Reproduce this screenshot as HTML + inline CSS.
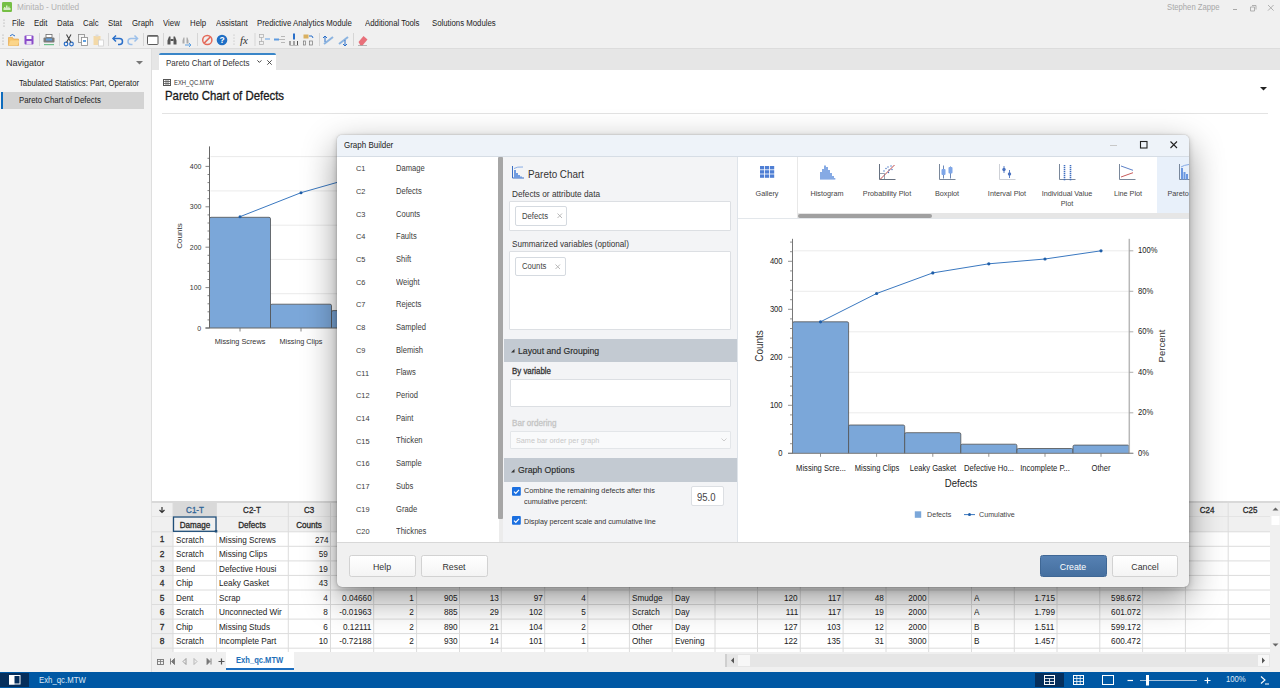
<!DOCTYPE html><html><head><meta charset="utf-8"><style>
html,body{margin:0;padding:0;}
body{width:1280px;height:688px;overflow:hidden;position:relative;background:#f0f0f0;font-family:"Liberation Sans",sans-serif;}
.t{position:absolute;white-space:nowrap;line-height:1;}
svg{position:absolute;overflow:visible;}
</style></head><body>
<svg style="left:2px;top:2px" width="10" height="10"><rect width="10" height="10" rx="1.2" fill="#76bf44"/><path d="M1.5 8h7v-2h-1v-1.5h-1v1h-1v-2h-1.5v2h-1v-0.5h-1v1h-.5z" fill="#d6ecc4"/></svg>
<div class="t" style="left:17.00px;transform-origin:0 0;transform:scaleX(0.9346);top:3.18px;font-size:8.88px;color:#b2b2b2;">Minitab - Untitled</div>
<div class="t" style="left:1167.00px;transform-origin:0 0;transform:scaleX(0.9346);top:3.69px;font-size:8.24px;color:#a8a8a8;">Stephen Zappe</div>
<div style="position:absolute;left:1232.5px;top:9px;width:4.5px;height:1px;background:#a8a8a8"></div>
<svg style="left:1250px;top:5px" width="7" height="7"><path d="M2 .5h4v4M.5 2h4v4h-4z" fill="none" stroke="#a8a8a8" stroke-width=".9"/></svg>
<svg style="left:1267.5px;top:4.7px" width="6" height="6"><path d="M0 0L5.6 5.6M5.6 0L0 5.6" stroke="#a8a8a8" stroke-width=".9"/></svg>
<svg style="left:3px;top:19px" width="2" height="10"><circle cx="1" cy="1" r=".6" fill="#999"/><circle cx="1" cy="4" r=".6" fill="#999"/><circle cx="1" cy="7" r=".6" fill="#999"/></svg>
<div class="t" style="left:11.60px;transform-origin:0 0;transform:scaleX(0.9346);top:19.30px;font-size:8.35px;color:#1e1e1e;">File</div>
<div class="t" style="left:33.50px;transform-origin:0 0;transform:scaleX(0.9346);top:19.30px;font-size:8.35px;color:#1e1e1e;">Edit</div>
<div class="t" style="left:56.90px;transform-origin:0 0;transform:scaleX(0.9346);top:19.30px;font-size:8.35px;color:#1e1e1e;">Data</div>
<div class="t" style="left:82.90px;transform-origin:0 0;transform:scaleX(0.9346);top:19.30px;font-size:8.35px;color:#1e1e1e;">Calc</div>
<div class="t" style="left:107.90px;transform-origin:0 0;transform:scaleX(0.9346);top:19.30px;font-size:8.35px;color:#1e1e1e;">Stat</div>
<div class="t" style="left:131.60px;transform-origin:0 0;transform:scaleX(0.9346);top:19.30px;font-size:8.35px;color:#1e1e1e;">Graph</div>
<div class="t" style="left:162.50px;transform-origin:0 0;transform:scaleX(0.9346);top:19.30px;font-size:8.35px;color:#1e1e1e;">View</div>
<div class="t" style="left:189.50px;transform-origin:0 0;transform:scaleX(0.9346);top:19.30px;font-size:8.35px;color:#1e1e1e;">Help</div>
<div class="t" style="left:216.00px;transform-origin:0 0;transform:scaleX(0.9346);top:19.30px;font-size:8.35px;color:#1e1e1e;">Assistant</div>
<div class="t" style="left:257.00px;transform-origin:0 0;transform:scaleX(0.9346);top:19.30px;font-size:8.35px;color:#1e1e1e;">Predictive Analytics Module</div>
<div class="t" style="left:365.00px;transform-origin:0 0;transform:scaleX(0.9346);top:19.30px;font-size:8.35px;color:#1e1e1e;">Additional Tools</div>
<div class="t" style="left:432.00px;transform-origin:0 0;transform:scaleX(0.9346);top:19.30px;font-size:8.35px;color:#1e1e1e;">Solutions Modules</div>
<svg style="left:0;top:31px" width="380" height="17"><circle cx="3" cy="4" r=".6" fill="#999"/><circle cx="3" cy="7" r=".6" fill="#999"/><circle cx="3" cy="10" r=".6" fill="#999"/><circle cx="3" cy="13" r=".6" fill="#999"/><path d="M8.5 6.5h4l1 1.5h5v6.5h-10z" fill="#f7c46c" stroke="#e0a040" stroke-width=".6"/><path d="M8.5 14.5l2-5h9l-2 5z" fill="#fbd58a"/><path d="M10 5q2-3 5 0" fill="none" stroke="#2a6fc9" stroke-width="1"/><rect x="24.5" y="4.5" width="9" height="9" rx="1" fill="#8a4dc9"/><rect x="26.5" y="5" width="5" height="3" fill="#fff"/><rect x="26.5" y="10" width="5" height="3.5" fill="#e9dcf5"/><rect x="39" y="2" width="1" height="13" fill="#d6d6d6"/><rect x="46" y="3.5" width="6" height="3" fill="#fff" stroke="#6b6b6b" stroke-width=".8"/><rect x="43.5" y="6.5" width="11" height="5" rx="1" fill="#7a7a7a"/><rect x="46" y="7.5" width="6" height="2" fill="#5fa0e0"/><rect x="44" y="13" width="10" height="1.2" fill="#6cc08a"/><rect x="59" y="2" width="1" height="13" fill="#d6d6d6"/><circle cx="66" cy="13" r="1.8" fill="none" stroke="#2a6fc9" stroke-width="1.2"/><circle cx="71.5" cy="13" r="1.8" fill="none" stroke="#2a6fc9" stroke-width="1.2"/><path d="M66.5 11.5L71 3.5M71 11.5L66.5 3.5" stroke="#444" stroke-width="1.1"/><rect x="78.5" y="3.5" width="6" height="8" fill="#f4f4f4" stroke="#8a8a8a" stroke-width=".8"/><rect x="81.5" y="6.5" width="6" height="8" fill="#fff" stroke="#8a8a8a" stroke-width=".8"/><rect x="83" y="9" width="3" height="2" fill="#5fa0e0"/><rect x="93.5" y="5" width="7" height="9" fill="#f3d9a8"/><rect x="95.5" y="3.5" width="3" height="2" fill="#ddd"/><rect x="98.5" y="9" width="5" height="6" fill="#fff" stroke="#ccc" stroke-width=".7"/><rect x="108" y="2" width="1" height="13" fill="#d6d6d6"/><path d="M113.5 7.5h6a3 3 0 0 1 0 6h-1.5" fill="none" stroke="#2a6fc9" stroke-width="1.5"/><path d="M116 4.5l-3 3 3 3" fill="none" stroke="#2a6fc9" stroke-width="1.5"/><path d="M137 7.5h-6a3 3 0 0 0 0 6h1.5" fill="none" stroke="#9cc0ea" stroke-width="1.5"/><path d="M134.5 4.5l3 3-3 3" fill="none" stroke="#9cc0ea" stroke-width="1.5"/><rect x="143" y="2" width="1" height="13" fill="#d6d6d6"/><rect x="147.5" y="4.5" width="10.5" height="9" rx=".8" fill="#fff" stroke="#5a5a5a" stroke-width="1"/><rect x="147.5" y="4.5" width="10.5" height="1.3" fill="#6a6a6a"/><rect x="163" y="2" width="1" height="13" fill="#d6d6d6"/><path d="M167.5 13.5v-4l1.5-4h1.5v8zM176.5 13.5v-4l-1.5-4h-1.5v8z" fill="#555"/><rect x="170.5" y="8" width="3" height="2" fill="#555"/><path d="M182.5 12.5v-3l1-3h1v6zM188.5 12.5v-3l-1-3h-1v6z" fill="#aaa"/><path d="M185 14h6m-2-2l2 2-2 2" stroke="#5fa0e0" stroke-width="1" fill="none"/><rect x="197" y="2" width="1" height="13" fill="#d6d6d6"/><circle cx="207.3" cy="9" r="4.6" fill="none" stroke="#e46a5a" stroke-width="1.5"/><path d="M204.2 12.1l6.2-6.2" stroke="#e46a5a" stroke-width="1.5"/><circle cx="222" cy="9" r="5.3" fill="#1f6fc5"/><text x="222" y="12.2" font-size="8.5" font-weight="bold" fill="#fff" text-anchor="middle" font-family="Liberation Sans">?</text><circle cx="234" cy="4" r=".5" fill="#aaa"/><circle cx="234" cy="7" r=".5" fill="#aaa"/><circle cx="234" cy="10" r=".5" fill="#aaa"/><circle cx="234" cy="13" r=".5" fill="#aaa"/><text x="240" y="13" font-size="11" font-style="italic" font-family="Liberation Serif" fill="#333">fx</text><rect x="254.5" y="2" width="1" height="13" fill="#d6d6d6"/><rect x="259.5" y="3.5" width="4" height="3" fill="none" stroke="#aaa" stroke-width=".7"/><rect x="259.5" y="10.5" width="4" height="3" fill="none" stroke="#aaa" stroke-width=".7"/><rect x="265" y="7" width="5" height="2" fill="#a9c8ea"/><path d="M261.5 6.5v4" stroke="#aaa" stroke-width=".7"/><rect x="274" y="7.5" width="5" height="2" fill="#5f9be0"/><path d="M279 8.5h6M281 5.5h4M281 11.5h4" stroke="#aaa" stroke-width=".8"/><rect x="293" y="2.5" width="2" height="6" fill="#2a6fc9"/><path d="M290 14V10M294 14v-4M297.5 14v-4" stroke="#555" stroke-width="1"/><path d="M289.5 14.5h9" stroke="#999" stroke-width=".6"/><rect x="303.5" y="3.5" width="5" height="4" fill="#d9b060"/><path d="M309 5h3l1 2" stroke="#2a6fc9" stroke-width="1" fill="none"/><rect x="303.5" y="10" width="2" height="4" fill="none" stroke="#777" stroke-width=".7"/><rect x="309.5" y="10" width="3" height="4" fill="none" stroke="#777" stroke-width=".7"/><rect x="319" y="2" width="1" height="13" fill="#d6d6d6"/><path d="M324 13l9-7" stroke="#8cb4e0" stroke-width="2"/><path d="M325 5v6M323 7l2-2 2 2" stroke="#2a6fc9" stroke-width="1" fill="none"/><path d="M339 13l9-7" stroke="#8cb4e0" stroke-width="2"/><path d="M345 9v6M343 13l2 2 2-2" stroke="#2a6fc9" stroke-width="1" fill="none"/><rect x="353" y="2" width="1" height="13" fill="#d6d6d6"/><path d="M358.5 11l5-6 4 3.5-5 6h-2z" fill="#e8707a"/><path d="M358 14.5h9" stroke="#999" stroke-width=".7"/></svg>
<div style="position:absolute;left:0px;top:48px;width:1280px;height:1px;background:#dcdcdc"></div>
<div style="position:absolute;left:0px;top:49px;width:151px;height:623px;background:#f3f3f3"></div>
<div style="position:absolute;left:151px;top:49px;width:1px;height:623px;background:#dedede"></div>
<div class="t" style="left:5.50px;transform-origin:0 0;transform:scaleX(0.9346);top:57.99px;font-size:9.63px;color:#2a2a2a;">Navigator</div>
<svg style="left:136px;top:61px" width="7" height="4"><path d="M0 0h7l-3.5 3.5z" fill="#777"/></svg>
<div class="t" style="left:19.00px;transform-origin:0 0;transform:scaleX(0.9346);top:79.35px;font-size:8.29px;color:#222;">Tabulated Statistics: Part, Operator</div>
<div style="position:absolute;left:1px;top:92px;width:143px;height:16.5px;background:#d3d3d3"></div>
<div style="position:absolute;left:1px;top:92px;width:2px;height:16.5px;background:#0f6cbd"></div>
<div class="t" style="left:18.50px;transform-origin:0 0;transform:scaleX(0.9346);top:95.96px;font-size:8.4px;color:#222;">Pareto Chart of Defects</div>
<div style="position:absolute;left:152px;top:49px;width:1128px;height:21px;background:#e6e6e6"></div>
<div style="position:absolute;left:158.75px;top:53px;width:117px;height:17px;background:#fff;border-top:2px solid #3a86c8;box-sizing:border-box;border-radius:2px 2px 0 0"></div>
<div class="t" style="left:165.60px;transform-origin:0 0;transform:scaleX(0.9346);top:58.84px;font-size:8.56px;color:#333;">Pareto Chart of Defects</div>
<svg style="left:256.8px;top:60.4px" width="5" height="4"><path d="M.4 .4l2 2 2-2" fill="none" stroke="#444" stroke-width="1"/></svg>
<svg style="left:267px;top:60.2px" width="5" height="5"><path d="M.3 .3l4.4 4.4M4.7 .3l-4.4 4.4" stroke="#333" stroke-width=".85"/></svg>
<div style="position:absolute;left:152px;top:70px;width:1128px;height:431px;background:#fff"></div>
<svg style="left:163px;top:79px" width="8" height="7"><rect x=".5" y=".5" width="7" height="6" fill="none" stroke="#555" stroke-width="1"/><path d="M.5 2.5h7M.5 4.5h7M3 .5v6M5 .5v6" stroke="#555" stroke-width=".8"/></svg>
<div class="t" style="left:174.00px;transform-origin:0 0;transform:scaleX(0.9346);top:79.62px;font-size:6.31px;color:#333;">EXH_QC.MTW</div>
<div class="t" style="left:165.00px;transform-origin:0 0;transform:scaleX(0.9346);top:90.16px;font-size:12.2px;color:#1a1a1a;-webkit-text-stroke:0.3px currentColor;">Pareto Chart of Defects</div>
<div style="position:absolute;left:162px;top:113px;width:1106px;height:1px;background:#e3e3e3"></div>
<svg style="left:1260px;top:87px" width="7" height="4"><path d="M0 0h7l-3.5 3.5z" fill="#222"/></svg>
<svg style="left:0;top:0" width="1280" height="688"><path d="M210.5 293.7H575.5" stroke="#ebebeb" stroke-width="1"/><path d="M210.5 259.4H575.5" stroke="#ebebeb" stroke-width="1"/><path d="M210.5 225.2H575.5" stroke="#ebebeb" stroke-width="1"/><path d="M210.5 190.9H575.5" stroke="#ebebeb" stroke-width="1"/><path d="M210.5 156.6H575.5" stroke="#ebebeb" stroke-width="1"/><path d="M209.5 328.0V218.8q0 -1.5 1.5 -1.5H269.0q1.5 0 1.5 1.5V328.0" fill="#7ba7d9" stroke="#505050" stroke-width=".8"/><path d="M270.5 328.0V305.7q0 -1.5 1.5 -1.5H330.0q1.5 0 1.5 1.5V328.0" fill="#7ba7d9" stroke="#505050" stroke-width=".8"/><path d="M331.5 328.0V312.1q0 -1.5 1.5 -1.5H391.0q1.5 0 1.5 1.5V328.0" fill="#7ba7d9" stroke="#505050" stroke-width=".8"/><path d="M392.5 328.0V321.8q0 -1.5 1.5 -1.5H452.0q1.5 0 1.5 1.5V328.0" fill="#7ba7d9" stroke="#505050" stroke-width=".8"/><path d="M453.5 328.0V325.5q0 -1.5 1.5 -1.5H513.0q1.5 0 1.5 1.5V328.0" fill="#7ba7d9" stroke="#505050" stroke-width=".8"/><path d="M514.5 328.0V322.6q0 -1.5 1.5 -1.5H574.0q1.5 0 1.5 1.5V328.0" fill="#7ba7d9" stroke="#505050" stroke-width=".8"/><path d="M240.0 216.7 L301.0 192.7 L362.0 175.3 L423.0 167.6 L484.0 163.5 L545.0 156.6" fill="none" stroke="#3a78c0" stroke-width="1"/><circle cx="240.0" cy="216.7" r="1.5" fill="#1f5ea8"/><circle cx="301.0" cy="192.7" r="1.5" fill="#1f5ea8"/><circle cx="362.0" cy="175.3" r="1.5" fill="#1f5ea8"/><circle cx="423.0" cy="167.6" r="1.5" fill="#1f5ea8"/><circle cx="484.0" cy="163.5" r="1.5" fill="#1f5ea8"/><circle cx="545.0" cy="156.6" r="1.5" fill="#1f5ea8"/><path d="M209.5 146.4V328.0" stroke="#666" stroke-width="1"/><path d="M205.5 328.0H400" stroke="#666" stroke-width="1"/><path d="M205.5 328.0H209.5" stroke="#666" stroke-width=".8"/><path d="M207.5 319.9H209.5" stroke="#666" stroke-width=".8"/><path d="M207.5 311.8H209.5" stroke="#666" stroke-width=".8"/><path d="M207.5 303.8H209.5" stroke="#666" stroke-width=".8"/><path d="M207.5 295.7H209.5" stroke="#666" stroke-width=".8"/><path d="M205.5 287.6H209.5" stroke="#666" stroke-width=".8"/><path d="M207.5 279.5H209.5" stroke="#666" stroke-width=".8"/><path d="M207.5 271.4H209.5" stroke="#666" stroke-width=".8"/><path d="M207.5 263.4H209.5" stroke="#666" stroke-width=".8"/><path d="M207.5 255.3H209.5" stroke="#666" stroke-width=".8"/><path d="M205.5 247.2H209.5" stroke="#666" stroke-width=".8"/><path d="M207.5 239.1H209.5" stroke="#666" stroke-width=".8"/><path d="M207.5 231.0H209.5" stroke="#666" stroke-width=".8"/><path d="M207.5 223.0H209.5" stroke="#666" stroke-width=".8"/><path d="M207.5 214.9H209.5" stroke="#666" stroke-width=".8"/><path d="M205.5 206.8H209.5" stroke="#666" stroke-width=".8"/><path d="M207.5 198.7H209.5" stroke="#666" stroke-width=".8"/><path d="M207.5 190.6H209.5" stroke="#666" stroke-width=".8"/><path d="M207.5 182.6H209.5" stroke="#666" stroke-width=".8"/><path d="M207.5 174.5H209.5" stroke="#666" stroke-width=".8"/><path d="M205.5 166.4H209.5" stroke="#666" stroke-width=".8"/><path d="M207.5 158.3H209.5" stroke="#666" stroke-width=".8"/><path d="M240.0 328.0v3.5" stroke="#666" stroke-width=".8"/><path d="M301.0 328.0v3.5" stroke="#666" stroke-width=".8"/><path d="M362.0 328.0v3.5" stroke="#666" stroke-width=".8"/></svg>
<div class="t" style="right:1079.00px;transform-origin:100% 0;transform:scaleX(0.9346);top:324.58px;font-size:7.49px;color:#333;">0</div>
<div class="t" style="right:1079.00px;transform-origin:100% 0;transform:scaleX(0.9346);top:284.18px;font-size:7.49px;color:#333;">100</div>
<div class="t" style="right:1079.00px;transform-origin:100% 0;transform:scaleX(0.9346);top:243.78px;font-size:7.49px;color:#333;">200</div>
<div class="t" style="right:1079.00px;transform-origin:100% 0;transform:scaleX(0.9346);top:203.38px;font-size:7.49px;color:#333;">300</div>
<div class="t" style="right:1079.00px;transform-origin:100% 0;transform:scaleX(0.9346);top:162.98px;font-size:7.49px;color:#333;">400</div>
<div class="t" style="left:40.00px;width:400px;text-align:center;transform-origin:50% 0;transform:scaleX(0.9346);top:338.03px;font-size:7.81px;color:#333;">Missing Screws</div>
<div class="t" style="left:101.00px;width:400px;text-align:center;transform-origin:50% 0;transform:scaleX(0.9346);top:338.03px;font-size:7.81px;color:#333;">Missing Clips</div>
<div class="t" style="left:160px;top:232px;width:40px;text-align:center;font-size:8px;color:#333;transform:rotate(-90deg);transform-origin:20px 4px">Counts</div>
<div style="position:absolute;left:152px;top:501px;width:1128px;height:2px;background:#d9d9d9"></div>
<div style="position:absolute;left:152px;top:503px;width:1128px;height:149px;background:#fff"></div>
<svg style="left:0;top:0" width="1280" height="688"><rect x="151.8" y="503" width="1119.2" height="28.799999999999955" fill="#f0f0f0"/><rect x="151.8" y="503" width="21.2" height="149" fill="#f0f0f0"/><rect x="173" y="503" width="43.5" height="13.5" fill="#d9d9d9"/><path d="M151.8 531.8H1271" stroke="#dcdcdc" stroke-width="1"/><path d="M151.8 546.3H1271" stroke="#dcdcdc" stroke-width="1"/><path d="M151.8 560.9H1271" stroke="#dcdcdc" stroke-width="1"/><path d="M151.8 575.4H1271" stroke="#dcdcdc" stroke-width="1"/><path d="M151.8 590.0H1271" stroke="#dcdcdc" stroke-width="1"/><path d="M151.8 604.5H1271" stroke="#dcdcdc" stroke-width="1"/><path d="M151.8 619.1H1271" stroke="#dcdcdc" stroke-width="1"/><path d="M151.8 633.6H1271" stroke="#dcdcdc" stroke-width="1"/><path d="M151.8 648.2H1271" stroke="#dcdcdc" stroke-width="1"/><path d="M151.8 516.5H1271" stroke="#e4e4e4" stroke-width="1"/><path d="M173 503V652" stroke="#dcdcdc" stroke-width="1"/><path d="M216.5 503V652" stroke="#dcdcdc" stroke-width="1"/><path d="M288.3 503V652" stroke="#dcdcdc" stroke-width="1"/><path d="M330.5 503V652" stroke="#dcdcdc" stroke-width="1"/><path d="M373.7 503V652" stroke="#dcdcdc" stroke-width="1"/><path d="M416.6 503V652" stroke="#dcdcdc" stroke-width="1"/><path d="M459.5 503V652" stroke="#dcdcdc" stroke-width="1"/><path d="M501.3 503V652" stroke="#dcdcdc" stroke-width="1"/><path d="M544.7 503V652" stroke="#dcdcdc" stroke-width="1"/><path d="M587.8 503V652" stroke="#dcdcdc" stroke-width="1"/><path d="M629.4 503V652" stroke="#dcdcdc" stroke-width="1"/><path d="M672.2 503V652" stroke="#dcdcdc" stroke-width="1"/><path d="M715 503V652" stroke="#dcdcdc" stroke-width="1"/><path d="M757.5 503V652" stroke="#dcdcdc" stroke-width="1"/><path d="M800.3 503V652" stroke="#dcdcdc" stroke-width="1"/><path d="M843.1 503V652" stroke="#dcdcdc" stroke-width="1"/><path d="M886 503V652" stroke="#dcdcdc" stroke-width="1"/><path d="M928.7 503V652" stroke="#dcdcdc" stroke-width="1"/><path d="M971.5 503V652" stroke="#dcdcdc" stroke-width="1"/><path d="M1014.3 503V652" stroke="#dcdcdc" stroke-width="1"/><path d="M1057 503V652" stroke="#dcdcdc" stroke-width="1"/><path d="M1099.8 503V652" stroke="#dcdcdc" stroke-width="1"/><path d="M1142.6 503V652" stroke="#dcdcdc" stroke-width="1"/><path d="M1185.4 503V652" stroke="#dcdcdc" stroke-width="1"/><path d="M1228.2 503V652" stroke="#dcdcdc" stroke-width="1"/><path d="M1271 503V652" stroke="#dcdcdc" stroke-width="1"/><rect x="173.5" y="517" width="42.5" height="14.3" fill="none" stroke="#1f4e79" stroke-width="1.3"/><rect x="214.8" y="530" width="2.5" height="2.5" fill="#1f4e79"/></svg>
<svg style="left:158px;top:507px" width="8" height="7"><path d="M4 0v5M1.5 3l2.5 2.5 2.5-2.5" stroke="#333" stroke-width="1.2" fill="none"/></svg>
<div class="t" style="left:-5.25px;width:400px;text-align:center;transform-origin:50% 0;transform:scaleX(0.9346);top:506.24px;font-size:8.56px;color:#2f6496;-webkit-text-stroke:0.3px currentColor;">C1-T</div>
<div class="t" style="left:52.40px;width:400px;text-align:center;transform-origin:50% 0;transform:scaleX(0.9346);top:506.24px;font-size:8.56px;color:#2a2a2a;-webkit-text-stroke:0.3px currentColor;">C2-T</div>
<div class="t" style="left:109.40px;width:400px;text-align:center;transform-origin:50% 0;transform:scaleX(0.9346);top:506.24px;font-size:8.56px;color:#2a2a2a;-webkit-text-stroke:0.3px currentColor;">C3</div>
<div class="t" style="left:152.10px;width:400px;text-align:center;transform-origin:50% 0;transform:scaleX(0.9346);top:506.24px;font-size:8.56px;color:#2a2a2a;-webkit-text-stroke:0.3px currentColor;">C4</div>
<div class="t" style="left:195.15px;width:400px;text-align:center;transform-origin:50% 0;transform:scaleX(0.9346);top:506.24px;font-size:8.56px;color:#2a2a2a;-webkit-text-stroke:0.3px currentColor;">C5</div>
<div class="t" style="left:238.05px;width:400px;text-align:center;transform-origin:50% 0;transform:scaleX(0.9346);top:506.24px;font-size:8.56px;color:#2a2a2a;-webkit-text-stroke:0.3px currentColor;">C6</div>
<div class="t" style="left:280.40px;width:400px;text-align:center;transform-origin:50% 0;transform:scaleX(0.9346);top:506.24px;font-size:8.56px;color:#2a2a2a;-webkit-text-stroke:0.3px currentColor;">C7</div>
<div class="t" style="left:323.00px;width:400px;text-align:center;transform-origin:50% 0;transform:scaleX(0.9346);top:506.24px;font-size:8.56px;color:#2a2a2a;-webkit-text-stroke:0.3px currentColor;">C8</div>
<div class="t" style="left:366.25px;width:400px;text-align:center;transform-origin:50% 0;transform:scaleX(0.9346);top:506.24px;font-size:8.56px;color:#2a2a2a;-webkit-text-stroke:0.3px currentColor;">C9</div>
<div class="t" style="left:408.60px;width:400px;text-align:center;transform-origin:50% 0;transform:scaleX(0.9346);top:506.24px;font-size:8.56px;color:#2a2a2a;-webkit-text-stroke:0.3px currentColor;">C10</div>
<div class="t" style="left:450.80px;width:400px;text-align:center;transform-origin:50% 0;transform:scaleX(0.9346);top:506.24px;font-size:8.56px;color:#2a2a2a;-webkit-text-stroke:0.3px currentColor;">C11</div>
<div class="t" style="left:493.60px;width:400px;text-align:center;transform-origin:50% 0;transform:scaleX(0.9346);top:506.24px;font-size:8.56px;color:#2a2a2a;-webkit-text-stroke:0.3px currentColor;">C12</div>
<div class="t" style="left:536.25px;width:400px;text-align:center;transform-origin:50% 0;transform:scaleX(0.9346);top:506.24px;font-size:8.56px;color:#2a2a2a;-webkit-text-stroke:0.3px currentColor;">C13</div>
<div class="t" style="left:578.90px;width:400px;text-align:center;transform-origin:50% 0;transform:scaleX(0.9346);top:506.24px;font-size:8.56px;color:#2a2a2a;-webkit-text-stroke:0.3px currentColor;">C14</div>
<div class="t" style="left:621.70px;width:400px;text-align:center;transform-origin:50% 0;transform:scaleX(0.9346);top:506.24px;font-size:8.56px;color:#2a2a2a;-webkit-text-stroke:0.3px currentColor;">C15</div>
<div class="t" style="left:664.55px;width:400px;text-align:center;transform-origin:50% 0;transform:scaleX(0.9346);top:506.24px;font-size:8.56px;color:#2a2a2a;-webkit-text-stroke:0.3px currentColor;">C16</div>
<div class="t" style="left:707.35px;width:400px;text-align:center;transform-origin:50% 0;transform:scaleX(0.9346);top:506.24px;font-size:8.56px;color:#2a2a2a;-webkit-text-stroke:0.3px currentColor;">C17</div>
<div class="t" style="left:750.10px;width:400px;text-align:center;transform-origin:50% 0;transform:scaleX(0.9346);top:506.24px;font-size:8.56px;color:#2a2a2a;-webkit-text-stroke:0.3px currentColor;">C18</div>
<div class="t" style="left:792.90px;width:400px;text-align:center;transform-origin:50% 0;transform:scaleX(0.9346);top:506.24px;font-size:8.56px;color:#2a2a2a;-webkit-text-stroke:0.3px currentColor;">C19</div>
<div class="t" style="left:835.65px;width:400px;text-align:center;transform-origin:50% 0;transform:scaleX(0.9346);top:506.24px;font-size:8.56px;color:#2a2a2a;-webkit-text-stroke:0.3px currentColor;">C20</div>
<div class="t" style="left:878.40px;width:400px;text-align:center;transform-origin:50% 0;transform:scaleX(0.9346);top:506.24px;font-size:8.56px;color:#2a2a2a;-webkit-text-stroke:0.3px currentColor;">C21</div>
<div class="t" style="left:921.20px;width:400px;text-align:center;transform-origin:50% 0;transform:scaleX(0.9346);top:506.24px;font-size:8.56px;color:#2a2a2a;-webkit-text-stroke:0.3px currentColor;">C22</div>
<div class="t" style="left:964.00px;width:400px;text-align:center;transform-origin:50% 0;transform:scaleX(0.9346);top:506.24px;font-size:8.56px;color:#2a2a2a;-webkit-text-stroke:0.3px currentColor;">C23</div>
<div class="t" style="left:1006.80px;width:400px;text-align:center;transform-origin:50% 0;transform:scaleX(0.9346);top:506.24px;font-size:8.56px;color:#2a2a2a;-webkit-text-stroke:0.3px currentColor;">C24</div>
<div class="t" style="left:1049.60px;width:400px;text-align:center;transform-origin:50% 0;transform:scaleX(0.9346);top:506.24px;font-size:8.56px;color:#2a2a2a;-webkit-text-stroke:0.3px currentColor;">C25</div>
<div class="t" style="left:-5.25px;width:400px;text-align:center;transform-origin:50% 0;transform:scaleX(0.9346);top:520.95px;font-size:8.67px;color:#2a2a2a;-webkit-text-stroke:0.3px currentColor;">Damage</div>
<div class="t" style="left:52.40px;width:400px;text-align:center;transform-origin:50% 0;transform:scaleX(0.9346);top:520.95px;font-size:8.67px;color:#2a2a2a;-webkit-text-stroke:0.3px currentColor;">Defects</div>
<div class="t" style="left:109.40px;width:400px;text-align:center;transform-origin:50% 0;transform:scaleX(0.9346);top:520.95px;font-size:8.67px;color:#2a2a2a;-webkit-text-stroke:0.3px currentColor;">Counts</div>
<div class="t" style="left:-37.60px;width:400px;text-align:center;transform-origin:50% 0;transform:scaleX(0.9346);top:535.40px;font-size:8.99px;color:#2a2a2a;-webkit-text-stroke:0.3px currentColor;">1</div>
<div class="t" style="left:175.50px;transform-origin:0 0;transform:scaleX(0.9346);top:535.57px;font-size:8.77px;color:#222;">Scratch</div>
<div class="t" style="left:219.00px;transform-origin:0 0;transform:scaleX(0.9346);top:535.57px;font-size:8.77px;color:#222;">Missing Screws</div>
<div class="t" style="right:951.80px;transform-origin:100% 0;transform:scaleX(0.9346);top:535.57px;font-size:8.77px;color:#222;">274</div>
<div class="t" style="left:-37.60px;width:400px;text-align:center;transform-origin:50% 0;transform:scaleX(0.9346);top:549.95px;font-size:8.99px;color:#2a2a2a;-webkit-text-stroke:0.3px currentColor;">2</div>
<div class="t" style="left:175.50px;transform-origin:0 0;transform:scaleX(0.9346);top:550.12px;font-size:8.77px;color:#222;">Scratch</div>
<div class="t" style="left:219.00px;transform-origin:0 0;transform:scaleX(0.9346);top:550.12px;font-size:8.77px;color:#222;">Missing Clips</div>
<div class="t" style="right:951.80px;transform-origin:100% 0;transform:scaleX(0.9346);top:550.12px;font-size:8.77px;color:#222;">59</div>
<div class="t" style="left:-37.60px;width:400px;text-align:center;transform-origin:50% 0;transform:scaleX(0.9346);top:564.50px;font-size:8.99px;color:#2a2a2a;-webkit-text-stroke:0.3px currentColor;">3</div>
<div class="t" style="left:175.50px;transform-origin:0 0;transform:scaleX(0.9346);top:564.67px;font-size:8.77px;color:#222;">Bend</div>
<div class="t" style="left:219.00px;transform-origin:0 0;transform:scaleX(0.9346);top:564.67px;font-size:8.77px;color:#222;">Defective Housi</div>
<div class="t" style="right:951.80px;transform-origin:100% 0;transform:scaleX(0.9346);top:564.67px;font-size:8.77px;color:#222;">19</div>
<div class="t" style="left:-37.60px;width:400px;text-align:center;transform-origin:50% 0;transform:scaleX(0.9346);top:579.05px;font-size:8.99px;color:#2a2a2a;-webkit-text-stroke:0.3px currentColor;">4</div>
<div class="t" style="left:175.50px;transform-origin:0 0;transform:scaleX(0.9346);top:579.22px;font-size:8.77px;color:#222;">Chip</div>
<div class="t" style="left:219.00px;transform-origin:0 0;transform:scaleX(0.9346);top:579.22px;font-size:8.77px;color:#222;">Leaky Gasket</div>
<div class="t" style="right:951.80px;transform-origin:100% 0;transform:scaleX(0.9346);top:579.22px;font-size:8.77px;color:#222;">43</div>
<div class="t" style="left:-37.60px;width:400px;text-align:center;transform-origin:50% 0;transform:scaleX(0.9346);top:593.60px;font-size:8.99px;color:#2a2a2a;-webkit-text-stroke:0.3px currentColor;">5</div>
<div class="t" style="left:175.50px;transform-origin:0 0;transform:scaleX(0.9346);top:593.77px;font-size:8.77px;color:#222;">Dent</div>
<div class="t" style="left:219.00px;transform-origin:0 0;transform:scaleX(0.9346);top:593.77px;font-size:8.77px;color:#222;">Scrap</div>
<div class="t" style="right:951.80px;transform-origin:100% 0;transform:scaleX(0.9346);top:593.77px;font-size:8.77px;color:#222;">4</div>
<div class="t" style="right:908.60px;transform-origin:100% 0;transform:scaleX(0.9346);top:593.77px;font-size:8.77px;color:#222;">0.04660</div>
<div class="t" style="right:865.70px;transform-origin:100% 0;transform:scaleX(0.9346);top:593.77px;font-size:8.77px;color:#222;">1</div>
<div class="t" style="right:822.80px;transform-origin:100% 0;transform:scaleX(0.9346);top:593.77px;font-size:8.77px;color:#222;">905</div>
<div class="t" style="right:781.00px;transform-origin:100% 0;transform:scaleX(0.9346);top:593.77px;font-size:8.77px;color:#222;">13</div>
<div class="t" style="right:737.60px;transform-origin:100% 0;transform:scaleX(0.9346);top:593.77px;font-size:8.77px;color:#222;">97</div>
<div class="t" style="right:694.50px;transform-origin:100% 0;transform:scaleX(0.9346);top:593.77px;font-size:8.77px;color:#222;">4</div>
<div class="t" style="left:631.90px;transform-origin:0 0;transform:scaleX(0.9346);top:593.77px;font-size:8.77px;color:#222;">Smudge</div>
<div class="t" style="left:674.70px;transform-origin:0 0;transform:scaleX(0.9346);top:593.77px;font-size:8.77px;color:#222;">Day</div>
<div class="t" style="right:482.00px;transform-origin:100% 0;transform:scaleX(0.9346);top:593.77px;font-size:8.77px;color:#222;">120</div>
<div class="t" style="right:439.20px;transform-origin:100% 0;transform:scaleX(0.9346);top:593.77px;font-size:8.77px;color:#222;">117</div>
<div class="t" style="right:396.30px;transform-origin:100% 0;transform:scaleX(0.9346);top:593.77px;font-size:8.77px;color:#222;">48</div>
<div class="t" style="right:353.60px;transform-origin:100% 0;transform:scaleX(0.9346);top:593.77px;font-size:8.77px;color:#222;">2000</div>
<div class="t" style="left:974.00px;transform-origin:0 0;transform:scaleX(0.9346);top:593.77px;font-size:8.77px;color:#222;">A</div>
<div class="t" style="right:225.30px;transform-origin:100% 0;transform:scaleX(0.9346);top:593.77px;font-size:8.77px;color:#222;">1.715</div>
<div class="t" style="right:139.70px;transform-origin:100% 0;transform:scaleX(0.9346);top:593.77px;font-size:8.77px;color:#222;">598.672</div>
<div class="t" style="left:-37.60px;width:400px;text-align:center;transform-origin:50% 0;transform:scaleX(0.9346);top:608.15px;font-size:8.99px;color:#2a2a2a;-webkit-text-stroke:0.3px currentColor;">6</div>
<div class="t" style="left:175.50px;transform-origin:0 0;transform:scaleX(0.9346);top:608.32px;font-size:8.77px;color:#222;">Scratch</div>
<div class="t" style="left:219.00px;transform-origin:0 0;transform:scaleX(0.9346);top:608.32px;font-size:8.77px;color:#222;">Unconnected Wir</div>
<div class="t" style="right:951.80px;transform-origin:100% 0;transform:scaleX(0.9346);top:608.32px;font-size:8.77px;color:#222;">8</div>
<div class="t" style="right:908.60px;transform-origin:100% 0;transform:scaleX(0.9346);top:608.32px;font-size:8.77px;color:#222;">-0.01963</div>
<div class="t" style="right:865.70px;transform-origin:100% 0;transform:scaleX(0.9346);top:608.32px;font-size:8.77px;color:#222;">2</div>
<div class="t" style="right:822.80px;transform-origin:100% 0;transform:scaleX(0.9346);top:608.32px;font-size:8.77px;color:#222;">885</div>
<div class="t" style="right:781.00px;transform-origin:100% 0;transform:scaleX(0.9346);top:608.32px;font-size:8.77px;color:#222;">29</div>
<div class="t" style="right:737.60px;transform-origin:100% 0;transform:scaleX(0.9346);top:608.32px;font-size:8.77px;color:#222;">102</div>
<div class="t" style="right:694.50px;transform-origin:100% 0;transform:scaleX(0.9346);top:608.32px;font-size:8.77px;color:#222;">5</div>
<div class="t" style="left:631.90px;transform-origin:0 0;transform:scaleX(0.9346);top:608.32px;font-size:8.77px;color:#222;">Scratch</div>
<div class="t" style="left:674.70px;transform-origin:0 0;transform:scaleX(0.9346);top:608.32px;font-size:8.77px;color:#222;">Day</div>
<div class="t" style="right:482.00px;transform-origin:100% 0;transform:scaleX(0.9346);top:608.32px;font-size:8.77px;color:#222;">111</div>
<div class="t" style="right:439.20px;transform-origin:100% 0;transform:scaleX(0.9346);top:608.32px;font-size:8.77px;color:#222;">117</div>
<div class="t" style="right:396.30px;transform-origin:100% 0;transform:scaleX(0.9346);top:608.32px;font-size:8.77px;color:#222;">19</div>
<div class="t" style="right:353.60px;transform-origin:100% 0;transform:scaleX(0.9346);top:608.32px;font-size:8.77px;color:#222;">2000</div>
<div class="t" style="left:974.00px;transform-origin:0 0;transform:scaleX(0.9346);top:608.32px;font-size:8.77px;color:#222;">A</div>
<div class="t" style="right:225.30px;transform-origin:100% 0;transform:scaleX(0.9346);top:608.32px;font-size:8.77px;color:#222;">1.799</div>
<div class="t" style="right:139.70px;transform-origin:100% 0;transform:scaleX(0.9346);top:608.32px;font-size:8.77px;color:#222;">601.072</div>
<div class="t" style="left:-37.60px;width:400px;text-align:center;transform-origin:50% 0;transform:scaleX(0.9346);top:622.70px;font-size:8.99px;color:#2a2a2a;-webkit-text-stroke:0.3px currentColor;">7</div>
<div class="t" style="left:175.50px;transform-origin:0 0;transform:scaleX(0.9346);top:622.87px;font-size:8.77px;color:#222;">Chip</div>
<div class="t" style="left:219.00px;transform-origin:0 0;transform:scaleX(0.9346);top:622.87px;font-size:8.77px;color:#222;">Missing Studs</div>
<div class="t" style="right:951.80px;transform-origin:100% 0;transform:scaleX(0.9346);top:622.87px;font-size:8.77px;color:#222;">6</div>
<div class="t" style="right:908.60px;transform-origin:100% 0;transform:scaleX(0.9346);top:622.87px;font-size:8.77px;color:#222;">0.12111</div>
<div class="t" style="right:865.70px;transform-origin:100% 0;transform:scaleX(0.9346);top:622.87px;font-size:8.77px;color:#222;">2</div>
<div class="t" style="right:822.80px;transform-origin:100% 0;transform:scaleX(0.9346);top:622.87px;font-size:8.77px;color:#222;">890</div>
<div class="t" style="right:781.00px;transform-origin:100% 0;transform:scaleX(0.9346);top:622.87px;font-size:8.77px;color:#222;">21</div>
<div class="t" style="right:737.60px;transform-origin:100% 0;transform:scaleX(0.9346);top:622.87px;font-size:8.77px;color:#222;">104</div>
<div class="t" style="right:694.50px;transform-origin:100% 0;transform:scaleX(0.9346);top:622.87px;font-size:8.77px;color:#222;">2</div>
<div class="t" style="left:631.90px;transform-origin:0 0;transform:scaleX(0.9346);top:622.87px;font-size:8.77px;color:#222;">Other</div>
<div class="t" style="left:674.70px;transform-origin:0 0;transform:scaleX(0.9346);top:622.87px;font-size:8.77px;color:#222;">Day</div>
<div class="t" style="right:482.00px;transform-origin:100% 0;transform:scaleX(0.9346);top:622.87px;font-size:8.77px;color:#222;">127</div>
<div class="t" style="right:439.20px;transform-origin:100% 0;transform:scaleX(0.9346);top:622.87px;font-size:8.77px;color:#222;">103</div>
<div class="t" style="right:396.30px;transform-origin:100% 0;transform:scaleX(0.9346);top:622.87px;font-size:8.77px;color:#222;">12</div>
<div class="t" style="right:353.60px;transform-origin:100% 0;transform:scaleX(0.9346);top:622.87px;font-size:8.77px;color:#222;">2000</div>
<div class="t" style="left:974.00px;transform-origin:0 0;transform:scaleX(0.9346);top:622.87px;font-size:8.77px;color:#222;">B</div>
<div class="t" style="right:225.30px;transform-origin:100% 0;transform:scaleX(0.9346);top:622.87px;font-size:8.77px;color:#222;">1.511</div>
<div class="t" style="right:139.70px;transform-origin:100% 0;transform:scaleX(0.9346);top:622.87px;font-size:8.77px;color:#222;">599.172</div>
<div class="t" style="left:-37.60px;width:400px;text-align:center;transform-origin:50% 0;transform:scaleX(0.9346);top:637.25px;font-size:8.99px;color:#2a2a2a;-webkit-text-stroke:0.3px currentColor;">8</div>
<div class="t" style="left:175.50px;transform-origin:0 0;transform:scaleX(0.9346);top:637.42px;font-size:8.77px;color:#222;">Scratch</div>
<div class="t" style="left:219.00px;transform-origin:0 0;transform:scaleX(0.9346);top:637.42px;font-size:8.77px;color:#222;">Incomplete Part</div>
<div class="t" style="right:951.80px;transform-origin:100% 0;transform:scaleX(0.9346);top:637.42px;font-size:8.77px;color:#222;">10</div>
<div class="t" style="right:908.60px;transform-origin:100% 0;transform:scaleX(0.9346);top:637.42px;font-size:8.77px;color:#222;">-0.72188</div>
<div class="t" style="right:865.70px;transform-origin:100% 0;transform:scaleX(0.9346);top:637.42px;font-size:8.77px;color:#222;">2</div>
<div class="t" style="right:822.80px;transform-origin:100% 0;transform:scaleX(0.9346);top:637.42px;font-size:8.77px;color:#222;">930</div>
<div class="t" style="right:781.00px;transform-origin:100% 0;transform:scaleX(0.9346);top:637.42px;font-size:8.77px;color:#222;">14</div>
<div class="t" style="right:737.60px;transform-origin:100% 0;transform:scaleX(0.9346);top:637.42px;font-size:8.77px;color:#222;">101</div>
<div class="t" style="right:694.50px;transform-origin:100% 0;transform:scaleX(0.9346);top:637.42px;font-size:8.77px;color:#222;">1</div>
<div class="t" style="left:631.90px;transform-origin:0 0;transform:scaleX(0.9346);top:637.42px;font-size:8.77px;color:#222;">Other</div>
<div class="t" style="left:674.70px;transform-origin:0 0;transform:scaleX(0.9346);top:637.42px;font-size:8.77px;color:#222;">Evening</div>
<div class="t" style="right:482.00px;transform-origin:100% 0;transform:scaleX(0.9346);top:637.42px;font-size:8.77px;color:#222;">122</div>
<div class="t" style="right:439.20px;transform-origin:100% 0;transform:scaleX(0.9346);top:637.42px;font-size:8.77px;color:#222;">135</div>
<div class="t" style="right:396.30px;transform-origin:100% 0;transform:scaleX(0.9346);top:637.42px;font-size:8.77px;color:#222;">31</div>
<div class="t" style="right:353.60px;transform-origin:100% 0;transform:scaleX(0.9346);top:637.42px;font-size:8.77px;color:#222;">3000</div>
<div class="t" style="left:974.00px;transform-origin:0 0;transform:scaleX(0.9346);top:637.42px;font-size:8.77px;color:#222;">B</div>
<div class="t" style="right:225.30px;transform-origin:100% 0;transform:scaleX(0.9346);top:637.42px;font-size:8.77px;color:#222;">1.457</div>
<div class="t" style="right:139.70px;transform-origin:100% 0;transform:scaleX(0.9346);top:637.42px;font-size:8.77px;color:#222;">600.472</div>
<div style="position:absolute;left:1270px;top:503px;width:10px;height:149px;background:#f0f0f0"></div>
<svg style="left:1271px;top:504px" width="9" height="148"><path d="M1.5 6.5l3-3 3 3z" fill="#666"/><rect x=".5" y="12" width="8" height="9" fill="#fff"/><path d="M1.5 139.5l3 3 3-3z" fill="#666"/></svg>
<div style="position:absolute;left:152px;top:652px;width:1128px;height:19.5px;background:#f0f0f0"></div>
<svg style="left:155px;top:656px" width="75" height="12"><rect x="2.5" y="3.5" width="6" height="5" fill="none" stroke="#777" stroke-width=".9"/><path d="M2.5 5.5h6M5.5 3.5v5" stroke="#777" stroke-width=".8"/><path d="M15.5 2.5v6M19.5 2.5l-3 3 3 3z" stroke="#777" stroke-width=".9" fill="#777"/><path d="M31 2.5l-3 3 3 3z" stroke="#888" stroke-width=".8" fill="none"/><path d="M39 2.5l3 3-3 3z" stroke="#aaa" stroke-width=".8" fill="none"/><path d="M52 2.5l3 3-3 3zM56 2.5v6" stroke="#777" stroke-width=".9" fill="#777"/><path d="M63.5 5.5h6M66.5 2.5v6" stroke="#555" stroke-width="1.2"/></svg>
<div style="position:absolute;left:226px;top:652px;width:68px;height:17.5px;background:#fff;border-bottom:2px solid #1e6fc0;box-sizing:border-box"></div>
<div class="t" style="left:236.20px;transform-origin:0 0;transform:scaleX(0.9346);top:657.38px;font-size:8.13px;color:#1e6fb8;font-weight:bold;">Exh_qc.MTW</div>
<div style="position:absolute;left:725px;top:654px;width:545px;height:12.5px;background:#e6e6e6"></div>
<div style="position:absolute;left:725px;top:654px;width:1.5px;height:12.5px;background:#cfcfcf"></div>
<svg style="left:727px;top:654px" width="545" height="13"><path d="M7 3.5l-3 3 3 3z" fill="#555"/><rect x="11" y="1" width="12" height="11" fill="#f7f7f7"/><rect x="531" y="1" width="11" height="11" fill="#f7f7f7"/><path d="M535 3.5l3 3-3 3z" fill="#555"/></svg>
<div style="position:absolute;left:0px;top:671.5px;width:1280px;height:16.5px;background:#0058a4"></div>
<div style="position:absolute;left:0px;top:673px;width:29px;height:13.7px;background:#062f5c"></div>
<svg style="left:9px;top:675px" width="12" height="10"><rect x=".5" y=".5" width="10.5" height="8.5" fill="#062f5c" stroke="#fff" stroke-width="1"/><rect x="0" y="0" width="5.5" height="9.5" fill="#fff"/></svg>
<div class="t" style="left:39.00px;transform-origin:0 0;transform:scaleX(0.9346);top:676.00px;font-size:8.35px;color:#dfe9f5;">Exh_qc.MTW</div>
<div style="position:absolute;left:1034.6px;top:673.4px;width:29px;height:13.2px;background:#062f5c"></div>
<svg style="left:1040px;top:674px" width="240" height="13"><rect x="4.5" y="1.5" width="10" height="9" fill="none" stroke="#fff" stroke-width="1"/><path d="M4.5 4.5h10M4.5 7.5h10M9.5 4.5v6" stroke="#fff" stroke-width=".8"/><rect x="33.5" y="1.5" width="10" height="9" fill="none" stroke="#fff" stroke-width="1"/><path d="M33.5 4.5h10M33.5 7.5h10M36.8 1.5v9M40.2 1.5v9" stroke="#fff" stroke-width=".8"/><rect x="62.5" y="1.5" width="11" height="9" fill="none" stroke="#fff" stroke-width="1"/><path d="M87.5 6.5h5.5" stroke="#fff" stroke-width="1.2"/><path d="M100 6.5h57" stroke="#cfdcea" stroke-width=".8"/><rect x="106" y="1" width="3" height="10.5" fill="#fff"/><path d="M164.5 6.5h6M167.5 3.5v6" stroke="#fff" stroke-width="1.2"/><path d="M221 2.5l4 3.5-4 3.5M225 10h4" stroke="#fff" stroke-width="1.1" fill="none"/></svg>
<div class="t" style="left:1226.00px;transform-origin:0 0;transform:scaleX(0.9346);top:676.09px;font-size:8.24px;color:#dfe9f5;">100%</div>
<div style="position:absolute;left:337px;top:135px;width:852px;height:452px;background:#f0f0f0;border-radius:5px;box-shadow:0 12px 34px rgba(0,0,0,0.42), 0 2px 6px rgba(0,0,0,0.18), 0 0 1.5px rgba(0,0,0,0.3)"></div>
<div style="position:absolute;left:337px;top:135px;width:852px;height:21.5px;background:#eef3f9;border-radius:5px 5px 0 0;border-bottom:1px solid #d6dde5;box-sizing:border-box"></div>
<div class="t" style="left:343.50px;transform-origin:0 0;transform:scaleX(0.9346);top:141.14px;font-size:8.56px;color:#222;">Graph Builder</div>
<div style="position:absolute;left:1110px;top:144.5px;width:6.5px;height:1px;background:#c8c8c8"></div>
<svg style="left:1140px;top:141px" width="8" height="8"><rect x=".5" y=".5" width="6.5" height="6.5" fill="none" stroke="#222" stroke-width="1.1"/></svg>
<svg style="left:1170px;top:141px" width="8" height="8"><path d="M.5 .5l6.5 6.5M7 .5L.5 7" stroke="#222" stroke-width="1.1"/></svg>
<div style="position:absolute;left:337px;top:156.5px;width:162px;height:385.3px;background:#fff"></div>
<div style="position:absolute;left:499px;top:156.5px;width:4px;height:385.3px;background:#ececec"></div>
<div style="position:absolute;left:498.4px;top:157px;width:4.4px;height:362px;background:#a6a6a6;border-radius:1px"></div>
<div class="t" style="left:355.70px;transform-origin:0 0;transform:scaleX(0.9346);top:165.34px;font-size:7.92px;color:#3c3c3c;">C1</div>
<div class="t" style="left:395.80px;transform-origin:0 0;transform:scaleX(0.9346);top:165.18px;font-size:8.13px;color:#3c3c3c;">Damage</div>
<div class="t" style="left:355.70px;transform-origin:0 0;transform:scaleX(0.9346);top:188.03px;font-size:7.92px;color:#3c3c3c;">C2</div>
<div class="t" style="left:395.80px;transform-origin:0 0;transform:scaleX(0.9346);top:187.87px;font-size:8.13px;color:#3c3c3c;">Defects</div>
<div class="t" style="left:355.70px;transform-origin:0 0;transform:scaleX(0.9346);top:210.72px;font-size:7.92px;color:#3c3c3c;">C3</div>
<div class="t" style="left:395.80px;transform-origin:0 0;transform:scaleX(0.9346);top:210.56px;font-size:8.13px;color:#3c3c3c;">Counts</div>
<div class="t" style="left:355.70px;transform-origin:0 0;transform:scaleX(0.9346);top:233.41px;font-size:7.92px;color:#3c3c3c;">C4</div>
<div class="t" style="left:395.80px;transform-origin:0 0;transform:scaleX(0.9346);top:233.25px;font-size:8.13px;color:#3c3c3c;">Faults</div>
<div class="t" style="left:355.70px;transform-origin:0 0;transform:scaleX(0.9346);top:256.10px;font-size:7.92px;color:#3c3c3c;">C5</div>
<div class="t" style="left:395.80px;transform-origin:0 0;transform:scaleX(0.9346);top:255.94px;font-size:8.13px;color:#3c3c3c;">Shift</div>
<div class="t" style="left:355.70px;transform-origin:0 0;transform:scaleX(0.9346);top:278.79px;font-size:7.92px;color:#3c3c3c;">C6</div>
<div class="t" style="left:395.80px;transform-origin:0 0;transform:scaleX(0.9346);top:278.63px;font-size:8.13px;color:#3c3c3c;">Weight</div>
<div class="t" style="left:355.70px;transform-origin:0 0;transform:scaleX(0.9346);top:301.48px;font-size:7.92px;color:#3c3c3c;">C7</div>
<div class="t" style="left:395.80px;transform-origin:0 0;transform:scaleX(0.9346);top:301.32px;font-size:8.13px;color:#3c3c3c;">Rejects</div>
<div class="t" style="left:355.70px;transform-origin:0 0;transform:scaleX(0.9346);top:324.17px;font-size:7.92px;color:#3c3c3c;">C8</div>
<div class="t" style="left:395.80px;transform-origin:0 0;transform:scaleX(0.9346);top:324.01px;font-size:8.13px;color:#3c3c3c;">Sampled</div>
<div class="t" style="left:355.70px;transform-origin:0 0;transform:scaleX(0.9346);top:346.86px;font-size:7.92px;color:#3c3c3c;">C9</div>
<div class="t" style="left:395.80px;transform-origin:0 0;transform:scaleX(0.9346);top:346.70px;font-size:8.13px;color:#3c3c3c;">Blemish</div>
<div class="t" style="left:355.70px;transform-origin:0 0;transform:scaleX(0.9346);top:369.55px;font-size:7.92px;color:#3c3c3c;">C11</div>
<div class="t" style="left:395.80px;transform-origin:0 0;transform:scaleX(0.9346);top:369.39px;font-size:8.13px;color:#3c3c3c;">Flaws</div>
<div class="t" style="left:355.70px;transform-origin:0 0;transform:scaleX(0.9346);top:392.24px;font-size:7.92px;color:#3c3c3c;">C12</div>
<div class="t" style="left:395.80px;transform-origin:0 0;transform:scaleX(0.9346);top:392.08px;font-size:8.13px;color:#3c3c3c;">Period</div>
<div class="t" style="left:355.70px;transform-origin:0 0;transform:scaleX(0.9346);top:414.93px;font-size:7.92px;color:#3c3c3c;">C14</div>
<div class="t" style="left:395.80px;transform-origin:0 0;transform:scaleX(0.9346);top:414.77px;font-size:8.13px;color:#3c3c3c;">Paint</div>
<div class="t" style="left:355.70px;transform-origin:0 0;transform:scaleX(0.9346);top:437.62px;font-size:7.92px;color:#3c3c3c;">C15</div>
<div class="t" style="left:395.80px;transform-origin:0 0;transform:scaleX(0.9346);top:437.46px;font-size:8.13px;color:#3c3c3c;">Thicken</div>
<div class="t" style="left:355.70px;transform-origin:0 0;transform:scaleX(0.9346);top:460.31px;font-size:7.92px;color:#3c3c3c;">C16</div>
<div class="t" style="left:395.80px;transform-origin:0 0;transform:scaleX(0.9346);top:460.15px;font-size:8.13px;color:#3c3c3c;">Sample</div>
<div class="t" style="left:355.70px;transform-origin:0 0;transform:scaleX(0.9346);top:483.00px;font-size:7.92px;color:#3c3c3c;">C17</div>
<div class="t" style="left:395.80px;transform-origin:0 0;transform:scaleX(0.9346);top:482.84px;font-size:8.13px;color:#3c3c3c;">Subs</div>
<div class="t" style="left:355.70px;transform-origin:0 0;transform:scaleX(0.9346);top:505.69px;font-size:7.92px;color:#3c3c3c;">C19</div>
<div class="t" style="left:395.80px;transform-origin:0 0;transform:scaleX(0.9346);top:505.53px;font-size:8.13px;color:#3c3c3c;">Grade</div>
<div class="t" style="left:355.70px;transform-origin:0 0;transform:scaleX(0.9346);top:528.38px;font-size:7.92px;color:#3c3c3c;">C20</div>
<div class="t" style="left:395.80px;transform-origin:0 0;transform:scaleX(0.9346);top:528.22px;font-size:8.13px;color:#3c3c3c;">Thicknes</div>
<div style="position:absolute;left:503px;top:156.5px;width:234px;height:385.3px;background:#f3f4f6"></div>
<div style="position:absolute;left:736.5px;top:156.5px;width:1px;height:385.3px;background:#dfe4ea"></div>
<svg style="left:512px;top:166px" width="13" height="13"><path d="M.5 0v12h11.5" stroke="#3b6fc4" stroke-width="1" fill="none"/><rect x="2" y="4" width="2" height="8" fill="#6f9be0"/><rect x="4" y="7" width="2" height="5" fill="#6f9be0"/><rect x="6" y="9" width="2" height="3" fill="#6f9be0"/><rect x="8" y="10.5" width="2" height="1.5" fill="#6f9be0"/><path d="M2 2.5q3-2 9-1.5" stroke="#6f9be0" stroke-width=".8" fill="none"/></svg>
<div class="t" style="left:527.70px;transform-origin:0 0;transform:scaleX(0.9346);top:169.03px;font-size:10.59px;color:#333;">Pareto Chart</div>
<div class="t" style="left:511.70px;transform-origin:0 0;transform:scaleX(0.9346);top:190.42px;font-size:8.83px;color:#333;">Defects or attribute data</div>
<div style="position:absolute;left:509.4px;top:201.2px;width:221.8px;height:29.5px;background:#fff;border:1px solid #dcdfe3;box-sizing:border-box;border-radius:1px"></div>
<div style="position:absolute;left:515.2px;top:206.4px;width:51.6px;height:19.2px;background:#fff;border:1px solid #d5dae0;box-sizing:border-box;border-radius:2px"></div>
<div class="t" style="left:522.00px;transform-origin:0 0;transform:scaleX(0.9346);top:212.89px;font-size:8.24px;color:#444;">Defects</div>
<svg style="left:556.5px;top:213px" width="6" height="6"><path d="M.5 .5l4.5 4.5M5 .5L.5 5" stroke="#b0b0b0" stroke-width=".9"/></svg>
<div class="t" style="left:511.50px;transform-origin:0 0;transform:scaleX(0.9346);top:240.21px;font-size:8.72px;color:#333;">Summarized variables (optional)</div>
<div style="position:absolute;left:509.4px;top:251.2px;width:221.8px;height:79.1px;background:#fff;border:1px solid #dcdfe3;box-sizing:border-box;border-radius:1px"></div>
<div style="position:absolute;left:515.3px;top:256.6px;width:50.4px;height:19.7px;background:#fff;border:1px solid #d5dae0;box-sizing:border-box;border-radius:2px"></div>
<div class="t" style="left:522.00px;transform-origin:0 0;transform:scaleX(0.9346);top:263.19px;font-size:8.24px;color:#444;">Counts</div>
<svg style="left:555px;top:263.5px" width="6" height="6"><path d="M.5 .5l4.5 4.5M5 .5L.5 5" stroke="#b0b0b0" stroke-width=".9"/></svg>
<div style="position:absolute;left:504px;top:339.2px;width:232.5px;height:22.5px;background:#c3cad2"></div>
<svg style="left:511px;top:349px" width="4" height="4"><path d="M3.5 0v3.5H0z" fill="#333"/></svg>
<div class="t" style="left:517.60px;transform-origin:0 0;transform:scaleX(0.9346);top:346.75px;font-size:9.31px;color:#2a2a2a;-webkit-text-stroke:0.3px currentColor;-webkit-text-stroke:0.15px #2a2a2a">Layout and Grouping</div>
<div class="t" style="left:511.50px;transform-origin:0 0;transform:scaleX(0.9346);top:367.22px;font-size:8.45px;color:#333;-webkit-text-stroke:0.3px currentColor;">By variable</div>
<div style="position:absolute;left:509.6px;top:378.6px;width:221.7px;height:28.8px;background:#fff;border:1px solid #dcdfe3;box-sizing:border-box;border-radius:1px"></div>
<div class="t" style="left:511.50px;transform-origin:0 0;transform:scaleX(0.9346);top:419.05px;font-size:8.67px;color:#c4c4c4;-webkit-text-stroke:0.3px currentColor;">Bar ordering</div>
<div style="position:absolute;left:509.6px;top:431.1px;width:221.7px;height:18.4px;background:#f9fafb;border:1px solid #e3e6e9;box-sizing:border-box;border-radius:1px"></div>
<div class="t" style="left:516.30px;transform-origin:0 0;transform:scaleX(0.9346);top:436.77px;font-size:7.76px;color:#c8c8c8;">Same bar order per graph</div>
<svg style="left:721px;top:438px" width="6" height="4"><path d="M.5 .5l2.5 2.5 2.5-2.5" stroke="#c8c8c8" stroke-width=".9" fill="none"/></svg>
<div style="position:absolute;left:504px;top:458px;width:232.5px;height:23.6px;background:#c3cad2"></div>
<svg style="left:511px;top:468.5px" width="4" height="4"><path d="M3.5 0v3.5H0z" fill="#333"/></svg>
<div class="t" style="left:517.60px;transform-origin:0 0;transform:scaleX(0.9346);top:466.05px;font-size:9.31px;color:#2a2a2a;-webkit-text-stroke:0.3px currentColor;-webkit-text-stroke:0.15px #2a2a2a">Graph Options</div>
<svg style="left:511.9px;top:487.3px" width="9" height="9"><rect width="8.8" height="8.8" rx="1" fill="#1a6fe0"/><path d="M2 4.6l1.8 1.8 3.2-3.6" stroke="#fff" stroke-width="1.2" fill="none"/></svg>
<svg style="left:511.9px;top:516px" width="9" height="9"><rect width="8.8" height="8.8" rx="1" fill="#1a6fe0"/><path d="M2 4.6l1.8 1.8 3.2-3.6" stroke="#fff" stroke-width="1.2" fill="none"/></svg>
<div class="t" style="left:524.00px;transform-origin:0 0;transform:scaleX(0.9346);top:487.43px;font-size:7.81px;color:#333;">Combine the remaining defects after this</div>
<div class="t" style="left:524.00px;transform-origin:0 0;transform:scaleX(0.9346);top:498.03px;font-size:7.81px;color:#333;">cumulative percent:</div>
<div class="t" style="left:524.00px;transform-origin:0 0;transform:scaleX(0.9346);top:517.62px;font-size:7.7px;color:#333;">Display percent scale and cumulative line</div>
<div style="position:absolute;left:691.4px;top:486.4px;width:33px;height:20.1px;background:#fff;border:1px solid #dcdfe3;box-sizing:border-box;border-radius:2px"></div>
<div class="t" style="left:697.20px;transform-origin:0 0;transform:scaleX(0.9346);top:493.17px;font-size:10.17px;color:#444;">95.0</div>
<div style="position:absolute;left:737.5px;top:156.5px;width:451.5px;height:385.3px;background:#fff"></div>
<div style="position:absolute;left:1157.2px;top:156.5px;width:31.8px;height:56.3px;background:#e8f0fa"></div>
<div style="position:absolute;left:796.7px;top:156.5px;width:1px;height:62px;background:#e8e8e8"></div>
<div style="position:absolute;left:797.7px;top:212.8px;width:391.3px;height:5.8px;background:#e6e6e6"></div>
<div style="position:absolute;left:798.3px;top:213.8px;width:134.1px;height:4.2px;background:#a0a0a0;border-radius:2px"></div>
<div style="position:absolute;left:737.5px;top:218.4px;width:451.5px;height:1px;background:#e3e7eb"></div>
<div class="t" style="left:567.00px;width:400px;text-align:center;transform-origin:50% 0;transform:scaleX(0.9346);top:189.77px;font-size:7.76px;color:#444;">Gallery</div>
<div class="t" style="left:627.30px;width:400px;text-align:center;transform-origin:50% 0;transform:scaleX(0.9346);top:189.77px;font-size:7.76px;color:#444;">Histogram</div>
<div class="t" style="left:687.20px;width:400px;text-align:center;transform-origin:50% 0;transform:scaleX(0.9346);top:189.77px;font-size:7.76px;color:#444;">Probability Plot</div>
<div class="t" style="left:747.30px;width:400px;text-align:center;transform-origin:50% 0;transform:scaleX(0.9346);top:189.77px;font-size:7.76px;color:#444;">Boxplot</div>
<div class="t" style="left:806.80px;width:400px;text-align:center;transform-origin:50% 0;transform:scaleX(0.9346);top:189.77px;font-size:7.76px;color:#444;">Interval Plot</div>
<div class="t" style="left:867.00px;width:400px;text-align:center;transform-origin:50% 0;transform:scaleX(0.9346);top:189.77px;font-size:7.76px;color:#444;">Individual Value</div>
<div class="t" style="left:927.50px;width:400px;text-align:center;transform-origin:50% 0;transform:scaleX(0.9346);top:189.77px;font-size:7.76px;color:#444;">Line Plot</div>
<div class="t" style="left:867.00px;width:400px;text-align:center;transform-origin:50% 0;transform:scaleX(0.9346);top:200.17px;font-size:7.76px;color:#444;">Plot</div>
<div style="position:absolute;left:1157px;top:185px;width:32px;height:14px;overflow:hidden"><div class="t" style="left:10.4px;top:5.17px;font-size:7.25px;color:#444">Pareto Chart</div></div>
<svg style="left:0;top:0" width="1280" height="688"><rect x="760.0" y="166.0" width="4.2" height="3.4" fill="#4f7fd4"/><rect x="765.0" y="166.0" width="4.2" height="3.4" fill="#4f7fd4"/><rect x="770.0" y="166.0" width="4.2" height="3.4" fill="#4f7fd4"/><rect x="760.0" y="170.2" width="4.2" height="3.4" fill="#4f7fd4"/><rect x="765.0" y="170.2" width="4.2" height="3.4" fill="#4f7fd4"/><rect x="770.0" y="170.2" width="4.2" height="3.4" fill="#4f7fd4"/><rect x="760.0" y="174.4" width="4.2" height="3.4" fill="#4f7fd4"/><rect x="765.0" y="174.4" width="4.2" height="3.4" fill="#4f7fd4"/><rect x="770.0" y="174.4" width="4.2" height="3.4" fill="#4f7fd4"/><rect x="820.25" y="172" width="1.5" height="7.6" fill="#5f8fdc"/><rect x="822.25" y="169" width="1.5" height="10.6" fill="#5f8fdc"/><rect x="824.25" y="165.5" width="1.5" height="14.1" fill="#5f8fdc"/><rect x="826.25" y="167" width="1.5" height="12.6" fill="#5f8fdc"/><rect x="828.25" y="170" width="1.5" height="9.6" fill="#5f8fdc"/><rect x="830.25" y="173" width="1.5" height="6.6" fill="#5f8fdc"/><rect x="832.25" y="176" width="1.5" height="3.6" fill="#5f8fdc"/><rect x="834.25" y="178" width="1.0" height="1.6" fill="#5f8fdc"/><path d="M879.5 164v15.5h16" stroke="#556070" stroke-width=".9" fill="none"/><path d="M880.5 179l14-14" stroke="#c04a4a" stroke-width="1"/><path d="M879.5 173.5h5v6" stroke="#6b7a90" stroke-width=".7" fill="none"/><circle cx="884" cy="171" r=".7" fill="#3f6fc0"/><circle cx="886" cy="168.5" r=".7" fill="#3f6fc0"/><circle cx="888" cy="167" r=".7" fill="#3f6fc0"/><circle cx="889" cy="170" r=".7" fill="#3f6fc0"/><circle cx="891" cy="166" r=".7" fill="#3f6fc0"/><circle cx="892" cy="169.5" r=".7" fill="#3f6fc0"/><circle cx="888.5" cy="172.5" r=".7" fill="#3f6fc0"/><path d="M939.5 164v15.5h16" stroke="#6b7a90" stroke-width=".9" fill="none"/><path d="M943.5 165.5v13M950.5 166.5v12" stroke="#5a7ab0" stroke-width=".9"/><rect x="941.5" y="169" width="4" height="6" rx="1" fill="#7ea6e8"/><rect x="948.5" y="167" width="4" height="6.5" rx="1" fill="#7ea6e8"/><path d="M999.5 164v15.5h16" stroke="#c8ccd2" stroke-width=".9" fill="none"/><path d="M1004 166v7M1009.5 170v8" stroke="#4a72c0" stroke-width=".9"/><circle cx="1004" cy="169.5" r="1.7" fill="#4a72c0"/><circle cx="1009.5" cy="174" r="1.7" fill="#4a72c0"/><path d="M1059.5 164v15.5h16" stroke="#6b7a90" stroke-width=".9" fill="none"/><rect x="1063.7" y="165" width="1.6" height="1.3" fill="#3f6fc0"/><rect x="1063.7" y="167" width="1.6" height="1.3" fill="#3f6fc0"/><rect x="1063.7" y="169" width="1.6" height="1.3" fill="#3f6fc0"/><rect x="1063.7" y="171" width="1.6" height="1.3" fill="#3f6fc0"/><rect x="1063.7" y="173" width="1.6" height="1.3" fill="#3f6fc0"/><rect x="1063.7" y="175" width="1.6" height="1.3" fill="#3f6fc0"/><rect x="1063.7" y="177" width="1.6" height="1.3" fill="#3f6fc0"/><rect x="1063.7" y="179" width="1.6" height="1.3" fill="#3f6fc0"/><rect x="1069.7" y="165" width="1.6" height="1.3" fill="#3f6fc0"/><rect x="1069.7" y="167" width="1.6" height="1.3" fill="#3f6fc0"/><rect x="1069.7" y="169" width="1.6" height="1.3" fill="#3f6fc0"/><rect x="1069.7" y="171" width="1.6" height="1.3" fill="#3f6fc0"/><rect x="1069.7" y="173" width="1.6" height="1.3" fill="#3f6fc0"/><rect x="1069.7" y="175" width="1.6" height="1.3" fill="#3f6fc0"/><rect x="1069.7" y="177" width="1.6" height="1.3" fill="#3f6fc0"/><rect x="1069.7" y="179" width="1.6" height="1.3" fill="#3f6fc0"/><path d="M1119.5 164v15.5h16" stroke="#6b7a90" stroke-width=".9" fill="none"/><path d="M1121 166l12 4.3" stroke="#4a72c0" stroke-width=".9"/><path d="M1121 177l12-4.3" stroke="#c04a4a" stroke-width=".9"/><path d="M1179.5 164v15.5h10" stroke="#6b7a90" stroke-width=".9" fill="none"/><rect x="1181" y="168" width="2" height="11.5" fill="#6b97e0"/><rect x="1183.5" y="172" width="2" height="7.5" fill="#6b97e0"/><rect x="1186" y="174" width="2" height="5.5" fill="#6b97e0"/><path d="M1181 167q3-2 8-2.5" stroke="#6b97e0" stroke-width=".8" fill="none"/></svg>
<svg style="left:0;top:0" width="1280" height="688"><path d="M793.5 412.8H1129.3" stroke="#ebebeb" stroke-width="1"/><path d="M793.5 372.3H1129.3" stroke="#ebebeb" stroke-width="1"/><path d="M793.5 331.8H1129.3" stroke="#ebebeb" stroke-width="1"/><path d="M793.5 291.3H1129.3" stroke="#ebebeb" stroke-width="1"/><path d="M793.5 250.8H1129.3" stroke="#ebebeb" stroke-width="1"/><path d="M792.5 453.3V323.3q0 -1.5 1.5 -1.5H847.1q1.5 0 1.5 1.5V453.3" fill="#7ba7d9" stroke="#505050" stroke-width=".8"/><path d="M848.6 453.3V426.5q0 -1.5 1.5 -1.5H903.2q1.5 0 1.5 1.5V453.3" fill="#7ba7d9" stroke="#505050" stroke-width=".8"/><path d="M904.7 453.3V434.2q0 -1.5 1.5 -1.5H959.3q1.5 0 1.5 1.5V453.3" fill="#7ba7d9" stroke="#505050" stroke-width=".8"/><path d="M960.8 453.3V445.7q0 -1.5 1.5 -1.5H1015.4q1.5 0 1.5 1.5V453.3" fill="#7ba7d9" stroke="#505050" stroke-width=".8"/><path d="M1016.9 453.3V450.0q0 -1.5 1.5 -1.5H1071.5q1.5 0 1.5 1.5V453.3" fill="#7ba7d9" stroke="#505050" stroke-width=".8"/><path d="M1073.0 453.3V446.6q0 -1.5 1.5 -1.5H1127.6q1.5 0 1.5 1.5V453.3" fill="#7ba7d9" stroke="#505050" stroke-width=".8"/><path d="M820.5 321.8 L876.6 293.5 L932.8 272.9 L988.8 263.8 L1045.0 259.0 L1101.0 250.8" fill="none" stroke="#3a78c0" stroke-width="1"/><circle cx="820.5" cy="321.8" r="1.6" fill="#1f5ea8"/><circle cx="876.6" cy="293.5" r="1.6" fill="#1f5ea8"/><circle cx="932.8" cy="272.9" r="1.6" fill="#1f5ea8"/><circle cx="988.8" cy="263.8" r="1.6" fill="#1f5ea8"/><circle cx="1045.0" cy="259.0" r="1.6" fill="#1f5ea8"/><circle cx="1101.0" cy="250.8" r="1.6" fill="#1f5ea8"/><path d="M792.5 238.8V453.3" stroke="#777" stroke-width="1"/><path d="M1129.3 238.8V453.3" stroke="#b8b8b8" stroke-width="1.5"/><path d="M788.0 453.3H1133.3" stroke="#777" stroke-width="1"/><path d="M788.0 453.3H792.5" stroke="#777" stroke-width=".8"/><path d="M790.0 443.7H792.5" stroke="#777" stroke-width=".8"/><path d="M790.0 434.1H792.5" stroke="#777" stroke-width=".8"/><path d="M790.0 424.5H792.5" stroke="#777" stroke-width=".8"/><path d="M790.0 414.9H792.5" stroke="#777" stroke-width=".8"/><path d="M788.0 405.3H792.5" stroke="#777" stroke-width=".8"/><path d="M790.0 395.7H792.5" stroke="#777" stroke-width=".8"/><path d="M790.0 386.1H792.5" stroke="#777" stroke-width=".8"/><path d="M790.0 376.5H792.5" stroke="#777" stroke-width=".8"/><path d="M790.0 366.9H792.5" stroke="#777" stroke-width=".8"/><path d="M788.0 357.3H792.5" stroke="#777" stroke-width=".8"/><path d="M790.0 347.7H792.5" stroke="#777" stroke-width=".8"/><path d="M790.0 338.1H792.5" stroke="#777" stroke-width=".8"/><path d="M790.0 328.5H792.5" stroke="#777" stroke-width=".8"/><path d="M790.0 318.9H792.5" stroke="#777" stroke-width=".8"/><path d="M788.0 309.3H792.5" stroke="#777" stroke-width=".8"/><path d="M790.0 299.7H792.5" stroke="#777" stroke-width=".8"/><path d="M790.0 290.1H792.5" stroke="#777" stroke-width=".8"/><path d="M790.0 280.5H792.5" stroke="#777" stroke-width=".8"/><path d="M790.0 270.9H792.5" stroke="#777" stroke-width=".8"/><path d="M788.0 261.3H792.5" stroke="#777" stroke-width=".8"/><path d="M790.0 251.7H792.5" stroke="#777" stroke-width=".8"/><path d="M790.0 242.1H792.5" stroke="#777" stroke-width=".8"/><path d="M1129.3 453.3h4" stroke="#999" stroke-width=".8"/><path d="M1129.3 412.8h4" stroke="#999" stroke-width=".8"/><path d="M1129.3 372.3h4" stroke="#999" stroke-width=".8"/><path d="M1129.3 331.8h4" stroke="#999" stroke-width=".8"/><path d="M1129.3 291.3h4" stroke="#999" stroke-width=".8"/><path d="M1129.3 250.8h4" stroke="#999" stroke-width=".8"/><path d="M820.5 453.3v3.5" stroke="#777" stroke-width=".8"/><path d="M876.6 453.3v3.5" stroke="#777" stroke-width=".8"/><path d="M932.8 453.3v3.5" stroke="#777" stroke-width=".8"/><path d="M988.8 453.3v3.5" stroke="#777" stroke-width=".8"/><path d="M1045.0 453.3v3.5" stroke="#777" stroke-width=".8"/><path d="M1101.0 453.3v3.5" stroke="#777" stroke-width=".8"/><rect x="914.8" y="511.3" width="6.4" height="6.5" fill="#7ba7d9"/><path d="M964 514.6h11" stroke="#3a78c0" stroke-width="1"/><circle cx="969.5" cy="514.6" r="1.5" fill="#1f5ea8"/></svg>
<div class="t" style="right:497.20px;transform-origin:100% 0;transform:scaleX(0.9346);top:449.58px;font-size:8.13px;color:#222;">0</div>
<div class="t" style="right:497.20px;transform-origin:100% 0;transform:scaleX(0.9346);top:401.58px;font-size:8.13px;color:#222;">100</div>
<div class="t" style="right:497.20px;transform-origin:100% 0;transform:scaleX(0.9346);top:353.58px;font-size:8.13px;color:#222;">200</div>
<div class="t" style="right:497.20px;transform-origin:100% 0;transform:scaleX(0.9346);top:305.58px;font-size:8.13px;color:#222;">300</div>
<div class="t" style="right:497.20px;transform-origin:100% 0;transform:scaleX(0.9346);top:257.58px;font-size:8.13px;color:#222;">400</div>
<div class="t" style="left:1138.40px;transform-origin:0 0;transform:scaleX(0.9346);top:449.58px;font-size:8.13px;color:#222;">0%</div>
<div class="t" style="left:1138.40px;transform-origin:0 0;transform:scaleX(0.9346);top:409.08px;font-size:8.13px;color:#222;">20%</div>
<div class="t" style="left:1138.40px;transform-origin:0 0;transform:scaleX(0.9346);top:368.58px;font-size:8.13px;color:#222;">40%</div>
<div class="t" style="left:1138.40px;transform-origin:0 0;transform:scaleX(0.9346);top:328.08px;font-size:8.13px;color:#222;">60%</div>
<div class="t" style="left:1138.40px;transform-origin:0 0;transform:scaleX(0.9346);top:287.58px;font-size:8.13px;color:#222;">80%</div>
<div class="t" style="left:1138.40px;transform-origin:0 0;transform:scaleX(0.9346);top:247.08px;font-size:8.13px;color:#222;">100%</div>
<div class="t" style="left:620.55px;width:400px;text-align:center;transform-origin:50% 0;transform:scaleX(0.9346);top:464.88px;font-size:8.13px;color:#222;">Missing Scre...</div>
<div class="t" style="left:676.65px;width:400px;text-align:center;transform-origin:50% 0;transform:scaleX(0.9346);top:464.88px;font-size:8.13px;color:#222;">Missing Clips</div>
<div class="t" style="left:732.75px;width:400px;text-align:center;transform-origin:50% 0;transform:scaleX(0.9346);top:464.88px;font-size:8.13px;color:#222;">Leaky Gasket</div>
<div class="t" style="left:788.85px;width:400px;text-align:center;transform-origin:50% 0;transform:scaleX(0.9346);top:464.88px;font-size:8.13px;color:#222;">Defective Ho...</div>
<div class="t" style="left:844.95px;width:400px;text-align:center;transform-origin:50% 0;transform:scaleX(0.9346);top:464.88px;font-size:8.13px;color:#222;">Incomplete P...</div>
<div class="t" style="left:901.05px;width:400px;text-align:center;transform-origin:50% 0;transform:scaleX(0.9346);top:464.88px;font-size:8.13px;color:#222;">Other</div>
<div class="t" style="left:760.90px;width:400px;text-align:center;transform-origin:50% 0;transform:scaleX(0.9346);top:478.89px;font-size:10.27px;color:#222;">Defects</div>
<div class="t" style="left:926.80px;transform-origin:0 0;transform:scaleX(0.9346);top:511.36px;font-size:7.65px;color:#444;">Defects</div>
<div class="t" style="left:978.50px;transform-origin:0 0;transform:scaleX(0.9346);top:511.36px;font-size:7.65px;color:#444;">Cumulative</div>
<div class="t" style="left:739.5px;top:341px;width:40px;text-align:center;font-size:10px;color:#333;transform:rotate(-90deg);transform-origin:20px 5px">Counts</div>
<div class="t" style="left:1142px;top:340.5px;width:40px;text-align:center;font-size:9.5px;color:#333;transform:rotate(-90deg);transform-origin:20px 5px">Percent</div>
<div style="position:absolute;left:337px;top:541.8px;width:852px;height:1px;background:#d8d8d8"></div>
<div style="position:absolute;left:349.3px;top:554.9px;width:66.3px;height:21.8px;background:linear-gradient(#ffffff,#f4f4f4);border:1px solid #d2d2d2;box-sizing:border-box;border-radius:2.5px"></div>
<div class="t" style="left:182.45px;width:400px;text-align:center;transform-origin:50% 0;transform:scaleX(0.9346);top:562.36px;font-size:9.42px;color:#333;">Help</div>
<div style="position:absolute;left:421.3px;top:554.9px;width:66.3px;height:21.8px;background:linear-gradient(#ffffff,#f4f4f4);border:1px solid #d2d2d2;box-sizing:border-box;border-radius:2.5px"></div>
<div class="t" style="left:254.45px;width:400px;text-align:center;transform-origin:50% 0;transform:scaleX(0.9346);top:562.36px;font-size:9.42px;color:#333;">Reset</div>
<div style="position:absolute;left:1040px;top:554.8px;width:66.8px;height:21.9px;background:linear-gradient(#5681b3,#456f9f);border:1px solid #3f6795;box-sizing:border-box;border-radius:2.5px"></div>
<div class="t" style="left:873.40px;width:400px;text-align:center;transform-origin:50% 0;transform:scaleX(0.9346);top:562.36px;font-size:9.42px;color:#fff;">Create</div>
<div style="position:absolute;left:1112.3px;top:554.8px;width:66.2px;height:21.9px;background:linear-gradient(#ffffff,#f4f4f4);border:1px solid #d2d2d2;box-sizing:border-box;border-radius:2.5px"></div>
<div class="t" style="left:945.40px;width:400px;text-align:center;transform-origin:50% 0;transform:scaleX(0.9346);top:562.36px;font-size:9.42px;color:#333;">Cancel</div>
</body></html>
